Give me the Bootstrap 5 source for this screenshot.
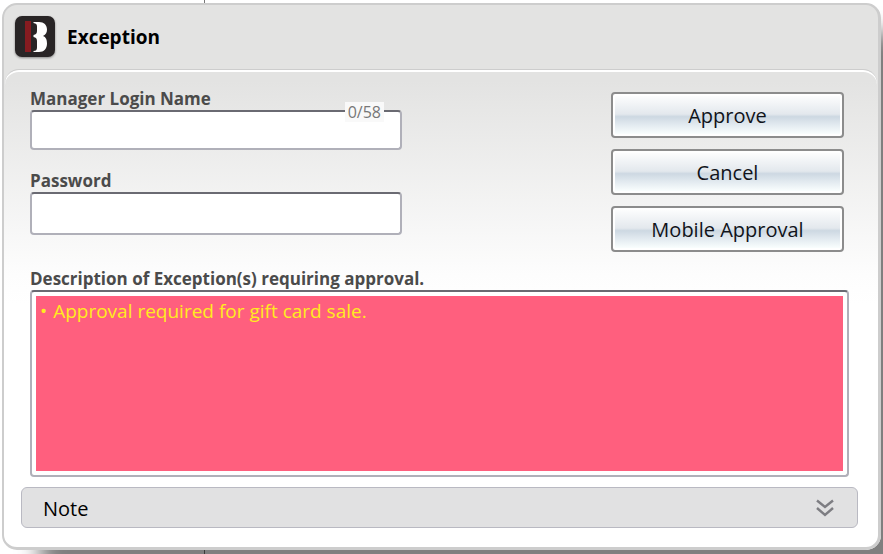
<!DOCTYPE html>
<html lang="en">
<head>
<meta charset="utf-8">
<meta name="viewport" content="width=device-width, initial-scale=1">
<title>Exception</title>
<link href="https://cdn.jsdelivr.net/npm/bootstrap@5.3.0/dist/css/bootstrap.min.css" rel="stylesheet">
<style>
  body {
    font-family: "Open Sans", "Noto Sans", sans-serif;
    color: #000;
    background: linear-gradient(#777, #777) 204px 0 / 1px 100% no-repeat #fff;
    padding: 3px 2px 5px;
  }
  .dialog-panel {
    border: 2px solid #cdcdcd;
    border-right-width: 3px;
    border-bottom-width: 3px;
    border-radius: 15px;
    background: linear-gradient(#e3e3e2 0, #e3e3e2 76px, #fdfdfd 270px, #fff 300px);
    box-shadow: 38px 30px 22px rgba(0, 0, 0, .5);
  }
  .dialog-head { height: 64px; padding: 0 11px; }
  .dialog-title { font-size: 19px; line-height: 26px; font-weight: 700; }
  .brand-mark { width: 40px; height: 42px; filter: drop-shadow(0 1px 1px rgba(0, 0, 0, .4)); }
  .dialog-content {
    border-top: 1px solid #cdcdcd;
    border-radius: 14px 14px 0 0;
    box-shadow: inset 0 2px 0 #fff;
    padding: 18px 19px 19px 16px;
    margin: 0 1px;
  }
  .inset-x { padding: 0 9px; }
  .caption { font-size: 17px; line-height: 22px; font-weight: 700; color: #4b4b4b; margin: 0; }
  .field-column { width: 372px; max-width: 50%; }
  .button-column { width: 233px; max-width: 40%; gap: 11px; padding-top: 4px; margin-right: 5px; }
  .sunken {
    border: 2px solid #b0b0b9;
    border-top-color: #6a6a72;
    border-radius: 4px;
    background: #fff;
  }
  .field-box { height: 40px; padding: 0 8px; font-size: 18px; }
  .field-box.tall { height: 43px; }
  .counter { right: 18px; top: -8px; padding: 0 3px; font-size: 16px; line-height: 20px; color: #777; background: #f9f9f9; }
  .action {
    height: 46px;
    padding: 2px 0 0;
    border: 2px solid #8c8c8c;
    border-radius: 4px;
    font-size: 20px;
    line-height: 28px;
    color: #10131a;
    background: linear-gradient(#fff 0, #e3e8ed 48%, #cdd8e2 54%, #e1e9ef 72%, #f8fdfd 94%);
    box-shadow: inset 0 0 0 2px #fff;
  }
  .description { padding: 4px; margin-bottom: 10px; }
  .alert-list { min-height: 175px; padding: 2px 4px; background: #ff5f7e; color: #ffec20; font-size: 19px; line-height: 26px; }
  .alert-list li::before { content: "•"; margin-right: 6px; }
  .note-bar {
    height: 41px;
    padding: 3px 23px 0 21px;
    border: 1px solid #b9b9c2;
    border-radius: 6px;
    background: #e1e1e2;
    font-size: 20px;
    line-height: 28px;
  }
</style>
<script src="https://cdn.jsdelivr.net/npm/bootstrap@5.3.0/dist/js/bootstrap.bundle.min.js"></script>
</head>
<body class="vh-100 overflow-hidden">
<main class="dialog-panel" role="dialog" aria-labelledby="dialogTitle">
  <header class="dialog-head d-flex align-items-center">
    <svg class="brand-mark flex-shrink-0" viewBox="0 0 40 42" aria-hidden="true">
      <rect width="40" height="41" rx="7" fill="#292526"/>
      <rect x="10" y="5" width="6" height="31" fill="#861b20"/>
      <path fill="#fff" d="M18.500 6H24c5 0 8 3 8 7.500 0 3-1 5-4 6.500 3 1 4 4 4 7.500 0 5-3 8.500-8 8.500h-5.500v-1c2.500 0 3.500-1 3.500-3.500V25c0-2.500-1-3.500-3.500-4v-2c2.500-.5 3.500-1.500 3.500-4v-4.500c0-2.500-1-3-3.500-3.500z"/>
    </svg>
    <h1 class="dialog-title mb-0 ms-2 ps-1" id="dialogTitle">Exception</h1>
  </header>
  <form class="dialog-content">
    <div class="inset-x">
      <div class="d-flex justify-content-between align-items-start">
        <div class="field-column">
          <label class="caption d-block" for="login">Manager Login Name</label>
          <div class="position-relative">
            <input class="sunken field-box w-100 d-block" type="text" id="login" maxlength="58">
            <span class="counter position-absolute">0/58</span>
          </div>
          <label class="caption d-block mt-3 pt-1" for="password">Password</label>
          <input class="sunken field-box tall w-100 d-block" type="password" id="password">
        </div>
        <div class="button-column d-flex flex-column">
          <button class="btn action" type="button">Approve</button>
          <button class="btn action" type="button">Cancel</button>
          <button class="btn action" type="button">Mobile Approval</button>
        </div>
      </div>
      <h2 class="caption mt-3" id="descTitle">Description of Exception(s) requiring approval.</h2>
      <section class="sunken description" aria-labelledby="descTitle">
        <ul class="alert-list list-unstyled mb-0">
          <li>Approval required for gift card sale.</li>
        </ul>
      </section>
    </div>
    <button class="note-bar w-100 d-flex justify-content-between align-items-start" type="button">
      <span class="pt-1">Note</span>
      <svg class="mt-2" width="18" height="18" viewBox="0 0 18 18" fill="none" stroke="#7d7d82" stroke-width="2.4" aria-hidden="true">
        <path d="M1 1.500l8 6.500 8-6.500M1 9l8 7 8-7"/>
      </svg>
    </button>
  </form>
</main>
</body>
</html>
